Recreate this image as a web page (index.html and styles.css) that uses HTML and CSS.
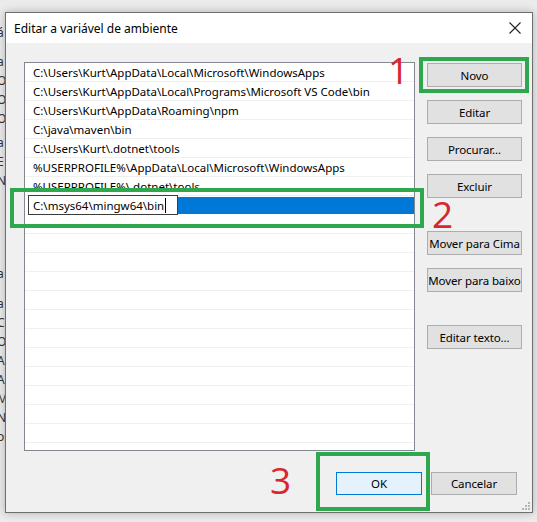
FILE: index.html
```html
<!DOCTYPE html>
<html lang="pt">
<head>
<meta charset="utf-8">
<link rel="stylesheet" href="styles.css">
</head>
<body>
<div class="desktop">
  <div class="behind-left">
    <span class="t33">á</span><span class="t62">a</span><span>Or</span><span>Or</span><span>Or</span><span class="s5">a</span><span>E</span><span>N</span>
    <span class="t273">a</span><span class="s11">a</span><span>Co</span><span>Or</span><span>A</span><span>A</span><span>M</span><span>NI</span><span>os</span>
  </div>
  <div class="dialog">
    <div class="titlebar">
      <span class="title">Editar a variável de ambiente</span>
      <svg class="close" width="12" height="12" viewBox="0 0 12 12"><path d="M0.5 0.5 L11.5 11.5 M11.5 0.5 L0.5 11.5" stroke="#222" stroke-width="1.1" fill="none"/></svg>
    </div>
    <div class="body">
      <div class="main">
        <div class="list">
          <div class="row">C:\Users\Kurt\AppData\Local\Microsoft\WindowsApps</div>
          <div class="row">C:\Users\Kurt\AppData\Local\Programs\Microsoft VS Code\bin</div>
          <div class="row">C:\Users\Kurt\AppData\Roaming\npm</div>
          <div class="row">C:\java\maven\bin</div>
          <div class="row">C:\Users\Kurt\.dotnet\tools</div>
          <div class="row">%USERPROFILE%\AppData\Local\Microsoft\WindowsApps</div>
          <div class="row">%USERPROFILE%\.dotnet\tools</div>
          <div class="row editing">
            <span class="editbox">C:\msys64\mingw64\bin<span class="caret"></span></span>
            <span class="selection"></span>
          </div>
          <div class="row"></div><div class="row"></div><div class="row"></div><div class="row"></div>
          <div class="row"></div><div class="row"></div><div class="row"></div><div class="row"></div>
          <div class="row"></div><div class="row"></div><div class="row"></div><div class="row"></div>
          <div class="row"></div>
        </div>
        <div class="side">
          <button class="btn first">Novo</button>
          <button class="btn">Editar</button>
          <button class="btn">Procurar...</button>
          <button class="btn">Excluir</button>
          <button class="btn far">Mover para Cima</button>
          <button class="btn">Mover para baixo</button>
          <button class="btn far">Editar texto...</button>
        </div>
      </div>
      <div class="footer">
        <button class="btn wide ok">OK</button>
        <button class="btn wide">Cancelar</button>
      </div>
    </div>
    <svg class="grip" width="8" height="8" viewBox="0 0 8 8"><g fill="#b5b5b5"><rect x="6" y="0" width="2" height="2"/><rect x="3" y="3" width="2" height="2"/><rect x="6" y="3" width="2" height="2"/><rect x="0" y="6" width="2" height="2"/><rect x="3" y="6" width="2" height="2"/><rect x="6" y="6" width="2" height="2"/></g></svg>
  </div>

  <div class="mark box1"></div>
  <div class="mark box2"></div>
  <div class="mark box3"></div>
  <span class="num n1">1</span>
  <span class="num n2">2</span>
  <span class="num n3">3</span>
</div>
</body>
</html>
```

FILE: styles.css
```css
* { box-sizing: border-box; }
html, body { margin: 0; padding: 0; }
body {
  font-family: "Noto Sans", "Open Sans", sans-serif;
  font-size: 11.5px;
  color: #000;
  background: #f0f0f0;
}
.desktop {
  position: relative;
  width: 537px;
  height: 522px;
  overflow: hidden;
  background: #ebebeb;
}
.behind-left {
  position: absolute;
  left: -3px;
  top: 0;
  width: 9px;
  display: flex;
  flex-direction: column;
  font-size: 12px;
  line-height: 19px;
  color: #333;
  overflow: hidden;
}
.behind-left .t33 { margin-top: 23px; }
.behind-left .t62 { margin-top: 10px; }
.behind-left .s5 { margin-top: 5px; }
.behind-left .t273 { margin-top: 74px; }
.behind-left .s11 { margin-top: 11px; }
.dialog {
  position: absolute;
  left: 5px;
  top: 12px;
  width: 528px;
  height: 501px;
  background: #f0f0f0;
  border: 1px solid #6e6e6e;
  box-shadow: 0 0 8px rgba(0,0,0,0.25);
  display: flex;
  flex-direction: column;
}
.titlebar {
  height: 30px;
  background: #fff;
  display: flex;
  align-items: center;
  justify-content: space-between;
  padding: 0 11px 0 8px;
}
.title { font-size: 12px; color: #000; }
.close { display: block; }
.body {
  flex: 1;
  padding: 19px 10px 0 18px;
  display: flex;
  flex-direction: column;
}
.main { display: flex; gap: 12px; }
.list {
  width: 391px;
  height: 389px;
  background: #fff;
  border: 1px solid #828790;
  overflow: hidden;
}
.row {
  height: 19px;
  line-height: 18px;
  padding-left: 8px;
  padding-top: 1px;
  border-bottom: 1px solid #f0f0f0;
  white-space: nowrap;
  overflow: hidden;
  display: flex;
  align-items: center;
}
.row.editing {
  padding-left: 3px;
  padding-top: 0;
  border-bottom-color: transparent;
  overflow: visible;
}
.editbox {
  height: 20px;
  width: 150px;
  border: 1px solid #3c3c3c;
  background: #fff;
  padding-left: 4px;
  padding-top: 1px;
  display: flex;
  align-items: center;
  flex: none;
}
.caret {
  display: inline-block;
  width: 1px;
  height: 15px;
  background: #000;
  margin-left: 1px;
}
.selection {
  flex: 1;
  height: 17px;
  background: #0078d7;
}
.side {
  width: 95px;
  display: flex;
  flex-direction: column;
}
.btn {
  font-family: inherit;
  font-size: 11.5px;
  color: #000;
  height: 24px;
  background: #e1e1e1;
  border: 1px solid #adadad;
  padding: 0;
  margin: 13px 0 0 0;
  white-space: nowrap;
  letter-spacing: -0.1px;
}
.side .btn.first { margin-top: 1px; }
.side .btn.far { margin-top: 33px; }
.footer {
  margin-top: 21px;
  display: flex;
  justify-content: flex-end;
  gap: 9px;
  padding-right: 5px;
}
.btn.wide { width: 86px; height: 23px; margin: 0; }
.btn.ok { background: #e5f1fb; border-color: #0078d7; }
.grip { position: absolute; right: 2px; bottom: 2px; }

.mark {
  position: absolute;
  border: 4px solid #2fa74f;
}
.box1 { left: 419px; top: 57px; width: 110px; height: 36px; }
.box2 { left: 10px; top: 188px; width: 414px; height: 40px; }
.box3 { left: 316px; top: 452px; width: 114px; height: 59px; }
.num {
  position: absolute;
  color: #d9252f;
  font-family: "Open Sans", "Noto Sans", sans-serif;
  font-size: 37px;
  line-height: 1;
}
.n1 { left: 388px; top: 51px; }
.n2 { left: 432px; top: 195px; }
.n3 { left: 270px; top: 461px; }
```
